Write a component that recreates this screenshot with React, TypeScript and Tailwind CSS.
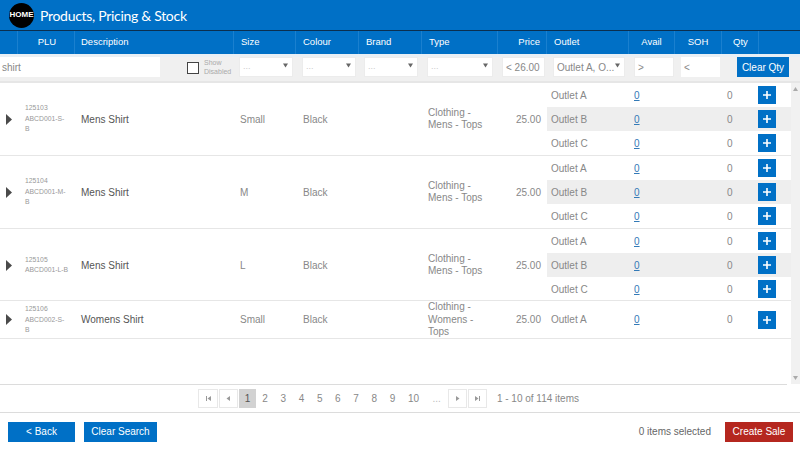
const cols = "grid-cols-[18px_57px_159px_62px_63px_63px_76px_49px_1fr]";

function Caret() {
  return (
    <svg width="7" height="5" viewBox="0 0 7 5" className="ml-auto shrink-0 mb-[3px]">
      <path d="M1 0.5h5L3.5 4.5z" fill="#666" />
    </svg>
  );
}

function Select({ w, text = "...", dark = false }: { w: string; text?: string; dark?: boolean }) {
  return (
    <div className={`${w} h-[20px] bg-white border border-[#ececec] flex items-center pl-[3px] pr-[3px] whitespace-nowrap overflow-hidden ${dark ? "text-[10px] text-[#888]" : "text-[9px] text-[#ccc]"}`}>
      <span>{text}</span>
      <Caret />
    </div>
  );
}

function HeadCell({ children, cls = "" }: { children?: React.ReactNode; cls?: string }) {
  return <div className={`border-r border-[#1a80cf] flex items-center h-full ${cls}`}>{children}</div>;
}

function SubRow({ name, shade = false }: { name: string; shade?: boolean }) {
  return (
    <div className={`h-[24px] flex items-center ${shade ? "bg-[#eeeeee]" : ""}`}>
      <div className="w-[87px] pl-[4px] text-[#888]">{name}</div>
      <div className="w-[93px] text-[#337ab7] underline">0</div>
      <div className="w-[31px] text-[#888]">0</div>
      <button className="w-[18px] h-[18px] bg-[#0070c6] flex items-center justify-center">
        <svg width="10" height="10" viewBox="0 0 10 10">
          <path d="M5 1v8M1 5h8" stroke="#fff" strokeWidth="1.6" />
        </svg>
      </button>
    </div>
  );
}

type RowData = {
  plu: string[];
  desc: string;
  size: string;
  type: string[];
  outlets: string[];
  h: string;
};

const rows: RowData[] = [
  { plu: ["125103", "ABCD001-S-", "B"], desc: "Mens Shirt", size: "Small", type: ["Clothing -", "Mens - Tops"], outlets: ["Outlet A", "Outlet B", "Outlet C"], h: "h-[73px]" },
  { plu: ["125104", "ABCD001-M-", "B"], desc: "Mens Shirt", size: "M", type: ["Clothing -", "Mens - Tops"], outlets: ["Outlet A", "Outlet B", "Outlet C"], h: "h-[73px]" },
  { plu: ["125105", "ABCD001-L-B"], desc: "Mens Shirt", size: "L", type: ["Clothing -", "Mens - Tops"], outlets: ["Outlet A", "Outlet B", "Outlet C"], h: "h-[72px]" },
  { plu: ["125106", "ABCD002-S-", "B"], desc: "Womens Shirt", size: "Small", type: ["Clothing -", "Womens -", "Tops"], outlets: ["Outlet A"], h: "h-[38px]" },
];

function Row({ r }: { r: RowData }) {
  return (
    <div className={`grid ${cols} ${r.h} border-b border-[#e6e6e6] items-center text-[10px] text-[#888]`}>
      <div className="flex justify-center">
        <svg width="6" height="11" viewBox="0 0 6 11">
          <path d="M0 0l6 5.5L0 11z" fill="#4a4a4a" />
        </svg>
      </div>
      <div className="pl-[7px] text-[6.8px] leading-[10.5px] text-[#999]">
        {r.plu.map((p) => (
          <div key={p}>{p}</div>
        ))}
      </div>
      <div className="pl-[6px] text-[#555]">{r.desc}</div>
      <div className="pl-[6px]">{r.size}</div>
      <div className="pl-[7px]">Black</div>
      <div />
      <div className="pl-[6px] leading-[12.5px]">
        {r.type.map((t) => (
          <div key={t}>{t}</div>
        ))}
      </div>
      <div className="text-right pr-[6px]">25.00</div>
      <div className="flex flex-col">
        {r.outlets.map((o, i) => (
          <SubRow key={o} name={o} shade={i === 1} />
        ))}
      </div>
    </div>
  );
}

function PageBtn({ d, w = "w-[19px]" }: { d: string; w?: string }) {
  return (
    <div className={`${w} h-[19px] border border-[#e8e8e8] flex items-center justify-center mr-px`}>
      <svg width="7" height="7" viewBox="0 0 7 7">
        <path d={d} fill="#999" />
      </svg>
    </div>
  );
}

export default function App() {
  return (
    <div className="w-[800px] h-[450px] overflow-hidden flex flex-col bg-white font-['Liberation_Sans',Arial,sans-serif]">
      <div className="h-[31px] shrink-0 bg-[#0070c6] border-b border-[#0b2f4f] flex items-center pl-[9px]">
        <div className="w-[25px] h-[25px] rounded-full bg-black text-white text-[8px] font-bold flex items-center justify-center">HOME</div>
        <div className="ml-[6px] text-white text-[14px] tracking-[-0.3px] font-['Lato',sans-serif] whitespace-nowrap">Products, Pricing &amp; Stock</div>
      </div>

      <div className="h-[23px] shrink-0 bg-[#0070c6] text-white text-[9.5px] grid grid-cols-[18px_57px_159px_62px_63px_63px_76px_49px_82px_46px_47px_37px_41px]">
        <HeadCell />
        <HeadCell cls="justify-center pl-[2px]">PLU</HeadCell>
        <HeadCell cls="pl-[6px]">Description</HeadCell>
        <HeadCell cls="pl-[7px]">Size</HeadCell>
        <HeadCell cls="pl-[7px]">Colour</HeadCell>
        <HeadCell cls="pl-[7px]">Brand</HeadCell>
        <HeadCell cls="pl-[7px]">Type</HeadCell>
        <HeadCell cls="justify-end pr-[6px]">Price</HeadCell>
        <HeadCell cls="pl-[7px]">Outlet</HeadCell>
        <HeadCell cls="justify-center">Avail</HeadCell>
        <HeadCell cls="justify-center">SOH</HeadCell>
        <HeadCell cls="pl-[11px]">Qty</HeadCell>
        <div />
      </div>

      <div className="h-[29px] shrink-0 bg-[#f0f0f0] border-t-[3px] border-t-[#e8eff5] border-b-[2px] border-b-[#e6e6e6] flex items-start text-[10px]">
        <div className="w-[160px] h-[20px] bg-white flex items-center pl-[2px] text-[#888]">shirt</div>
        <div className="ml-[27px] mt-[5px] w-[12px] h-[12px] border border-[#444] bg-white" />
        <div className="ml-[5px] mt-[1px] w-[35px] text-[7px] leading-[9px] text-[#aaa]">Show Disabled</div>
        <Select w="w-[54px]" />
        <div className="w-[9px]" />
        <Select w="w-[54px]" />
        <div className="w-[8px]" />
        <Select w="w-[54px]" />
        <div className="w-[9px]" />
        <Select w="w-[66px]" />
        <div className="ml-[9px] w-[43px] h-[20px] bg-white border border-[#ececec] pl-[3px] flex items-center text-[#888]">&lt; 26.00</div>
        <div className="w-[8px]" />
        <Select w="w-[72px]" text="Outlet A, O..." dark />
        <div className="ml-[9px] w-[40px] h-[20px] bg-white border border-[#ececec] pl-[3px] flex items-center text-[#888]">&gt;</div>
        <div className="ml-[7px] w-[39px] h-[20px] bg-white pl-[3px] flex items-center text-[#888]">&lt;</div>
        <button className="ml-[17px] w-[52px] h-[20px] bg-[#0070c6] text-white text-[10px]">Clear Qty</button>
      </div>

      <div className="flex-1 min-h-0 flex">
        <div className="w-[791px]">
          {rows.map((r) => (
            <Row key={r.plu[0]} r={r} />
          ))}
        </div>
        <div className="w-[9px] bg-[#f1f1f1] flex flex-col items-center justify-between py-[4px]">
          <svg width="5" height="4" viewBox="0 0 5 4"><path d="M2.5 0L5 4H0z" fill="#aaa" /></svg>
          <svg width="5" height="4" viewBox="0 0 5 4"><path d="M0 0h5L2.5 4z" fill="#aaa" /></svg>
        </div>
      </div>

      <div className="h-[29px] shrink-0 flex flex-col border-b border-[#dcdcdc]">
        <div className="h-px w-[787px] shrink-0 bg-[#dcdcdc]" />
        <div className="flex-1 flex items-center pl-[198px] text-[10px] text-[#888]">
          <PageBtn w="w-[20px]" d="M1 1v5h1V1zM6 1v5L2.5 3.5z" />
          <PageBtn d="M5 1v5L1.5 3.5z" />
          <div className="w-[17px] h-[19px] bg-[#d2d2d2] text-[#555] flex items-center justify-center">1</div>
          {["2", "3", "4", "5", "6", "7", "8", "9"].map((n) => (
            <div key={n} className="w-[18.2px] text-center">{n}</div>
          ))}
          <div className="w-[24px] text-center">10</div>
          <div className="w-[22.4px] text-center text-[#bbb]">...</div>
          <PageBtn d="M2 1v5l3.5-2.5z" />
          <PageBtn d="M1 1v5l3.5-2.5zM5 1v5h1V1z" />
          <div className="ml-[9px]">1 - 10 of 114 items</div>
        </div>
      </div>

      <div className="h-[37px] shrink-0 flex items-center pl-[8px] pr-[7px] text-[10px]">
        <button className="w-[67px] h-[20px] bg-[#0070c6] text-white">&lt; Back</button>
        <button className="ml-[9px] w-[73px] h-[20px] bg-[#0070c6] text-white">Clear Search</button>
        <div className="ml-auto text-[#666]">0 items selected</div>
        <button className="ml-[14px] w-[68px] h-[20px] bg-[#b5271f] text-white">Create Sale</button>
      </div>
    </div>
  );
}
